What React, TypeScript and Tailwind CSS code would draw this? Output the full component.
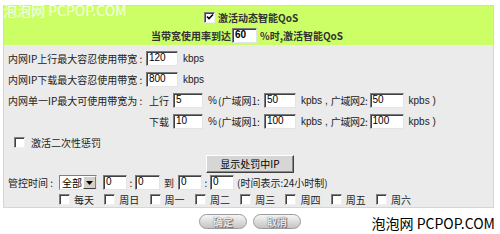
import React from 'react';

const cjk = { fontFamily: '"Noto Sans CJK SC", "Liberation Sans", sans-serif' };
const latin = { fontFamily: '"Liberation Sans", sans-serif' };

function Field({ value, w = 'w-[32px]' }: { value: string; w?: string }) {
  return (
    <div
      className={`${w} h-[15px] shrink-0 bg-white border border-t-[#7a7a7a] border-l-[#7a7a7a] border-b-[#e4e4e4] border-r-[#e4e4e4] shadow-[inset_1px_1px_0_#404040] pl-[2px] text-[10px] leading-[12px] text-black`}
      style={latin}
    >
      {value}
    </div>
  );
}

function Box({ checked = false }: { checked?: boolean }) {
  return (
    <div className="w-[11px] h-[11px] shrink-0 bg-white border border-t-[#808080] border-l-[#808080] border-b-[#f0f0f0] border-r-[#f0f0f0] shadow-[inset_1px_1px_0_#404040] flex items-center justify-center">
      {checked && (
        <svg width="8" height="8" viewBox="0 0 8 8">
          <path d="M1 3.5 L3 5.5 L7 1.5" stroke="#000" strokeWidth="1.6" fill="none" />
        </svg>
      )}
    </div>
  );
}

const days = ['每天', '周日', '周一', '周二', '周三', '周四', '周五', '周六'];

export default function App() {
  return (
    <div className="w-[500px] h-[234px] bg-white relative overflow-hidden whitespace-nowrap text-[10px] text-[#222]" style={cjk}>
      <div className="absolute left-[3px] top-[1px] text-[14px] leading-[18px] text-white/85">
        泡泡网 PCPOP.COM
      </div>

      <div className="pt-[5px] pl-[3px]">
        <div className="w-[491px] border border-[#d6d6d6] bg-[#ebebeb]">
          {/* green header */}
          <div className="bg-[#ccff66] h-[39px]">
            <div className="h-[21px] flex items-center pl-[200px] gap-[3px] pt-[1px]">
              <Box checked />
              <span className="font-bold text-[#333]">激活动态智能QoS</span>
            </div>
            <div className="h-[17px] flex items-center pl-[147px] gap-[1px] font-bold text-[#333]">
              <span>当带宽使用率到达</span>
              <Field value="60" w="w-[25px]" />
              <span className="ml-[2px]">%时,激活智能QoS</span>
            </div>
          </div>

          {/* body */}
          <div className="pt-[3px] pl-[4px]">
            <div className="h-[21px] flex items-center">
              <span className="w-[138px]">内网IP上行最大容忍使用带宽 :</span>
              <Field value="120" />
              <span className="ml-[5px]" style={latin}>kbps</span>
            </div>
            <div className="h-[21px] flex items-center">
              <span className="w-[138px]">内网IP下载最大容忍使用带宽 :</span>
              <Field value="800" />
              <span className="ml-[5px]" style={latin}>kbps</span>
            </div>
            {[
              ['内网单一IP最大可使用带宽为 :', '上行', '5', '50', '50'],
              ['', '下载', '10', '100', '100'],
            ].map(([label, dir, pct, w1, w2]) => (
              <div key={dir} className="h-[21px] flex items-center">
                <span className="w-[141px] shrink-0">{label}</span>
                <span className="w-[24px] shrink-0">{dir}</span>
                <Field value={pct} w="w-[30px]" />
                <span className="ml-[5px] w-[10px] shrink-0" style={latin}>%</span>
                <span className="w-[46px] shrink-0">(广域网1:</span>
                <Field value={w1} />
                <span className="ml-[5px] shrink-0" style={latin}>kpbs ,</span>
                <span className="ml-[3px] mr-[2px] shrink-0 tracking-[-0.3px]">广域网2:</span>
                <Field value={w2} w="w-[34px]" />
                <span className="ml-[5px]" style={latin}>kpbs )</span>
              </div>
            ))}
            <div className="h-[21px] flex items-center pl-[6px] gap-[6px]">
              <Box />
              <span>激活二次性惩罚</span>
            </div>
            <div className="h-[21px] flex items-center pl-[198px]">
              <div className="w-[88px] h-[18px] bg-[#d6d6d6] border border-t-white border-l-white border-b-[#404040] border-r-[#404040] shadow-[inset_-1px_-1px_0_#888] flex items-center justify-center text-black" style={{ fontFamily: '"Noto Sans CJK SC", "Liberation Serif", serif' }}>
                显示处罚中IP
              </div>
            </div>
            <div className="h-[17px] flex items-center">
              <span className="w-[51px]">管控时间 :</span>
              <div className="w-[38px] h-[15px] bg-white border border-t-[#808080] border-l-[#808080] border-b-[#e4e4e4] border-r-[#e4e4e4] flex items-center justify-between pl-[2px]">
                <span className="leading-none text-black">全部</span>
                <div className="w-[13px] h-[13px] bg-[#d4d0c8] border border-t-white border-l-white border-b-[#404040] border-r-[#808080] flex items-center justify-center">
                  <svg width="7" height="4" viewBox="0 0 7 4"><path d="M0 0 H7 L3.5 4 Z" fill="#000" /></svg>
                </div>
              </div>
              <div className="ml-[6px]"><Field value="0" w="w-[24px]" /></div>
              <span className="w-[8px] text-center">:</span>
              <Field value="0" w="w-[25px]" />
              <span className="w-[18px] text-center">到</span>
              <Field value="0" w="w-[24px]" />
              <span className="w-[8px] text-center">:</span>
              <Field value="0" w="w-[24px]" />
              <span className="ml-[3px]">(时间表示:24小时制)</span>
            </div>
            <div className="h-[16px] flex items-center pl-[51px]">
              {days.map((d) => (
                <div key={d} className="flex items-center w-[45.3px] gap-[4px]">
                  <Box />
                  <span>{d}</span>
                </div>
              ))}
            </div>
          </div>
        </div>
      </div>

      <div className="flex gap-[6px] pl-[199px] pt-[6px]">
        {['确定', '取消'].map((t) => (
          <div
            key={t}
            className="w-[48px] h-[15px] rounded-full border border-[#9a9a9a] bg-gradient-to-b from-[#f6f6f6] to-[#c4c4c4] flex items-center justify-center font-bold text-[#e8e8e8] [text-shadow:0_0_1px_#555,1px_1px_0_#777]"
          >
            {t}
          </div>
        ))}
      </div>

      <div className="absolute right-[5px] bottom-[2px] text-[14px] leading-[18px] text-black">
        泡泡网 PCPOP.COM
      </div>
    </div>
  );
}
